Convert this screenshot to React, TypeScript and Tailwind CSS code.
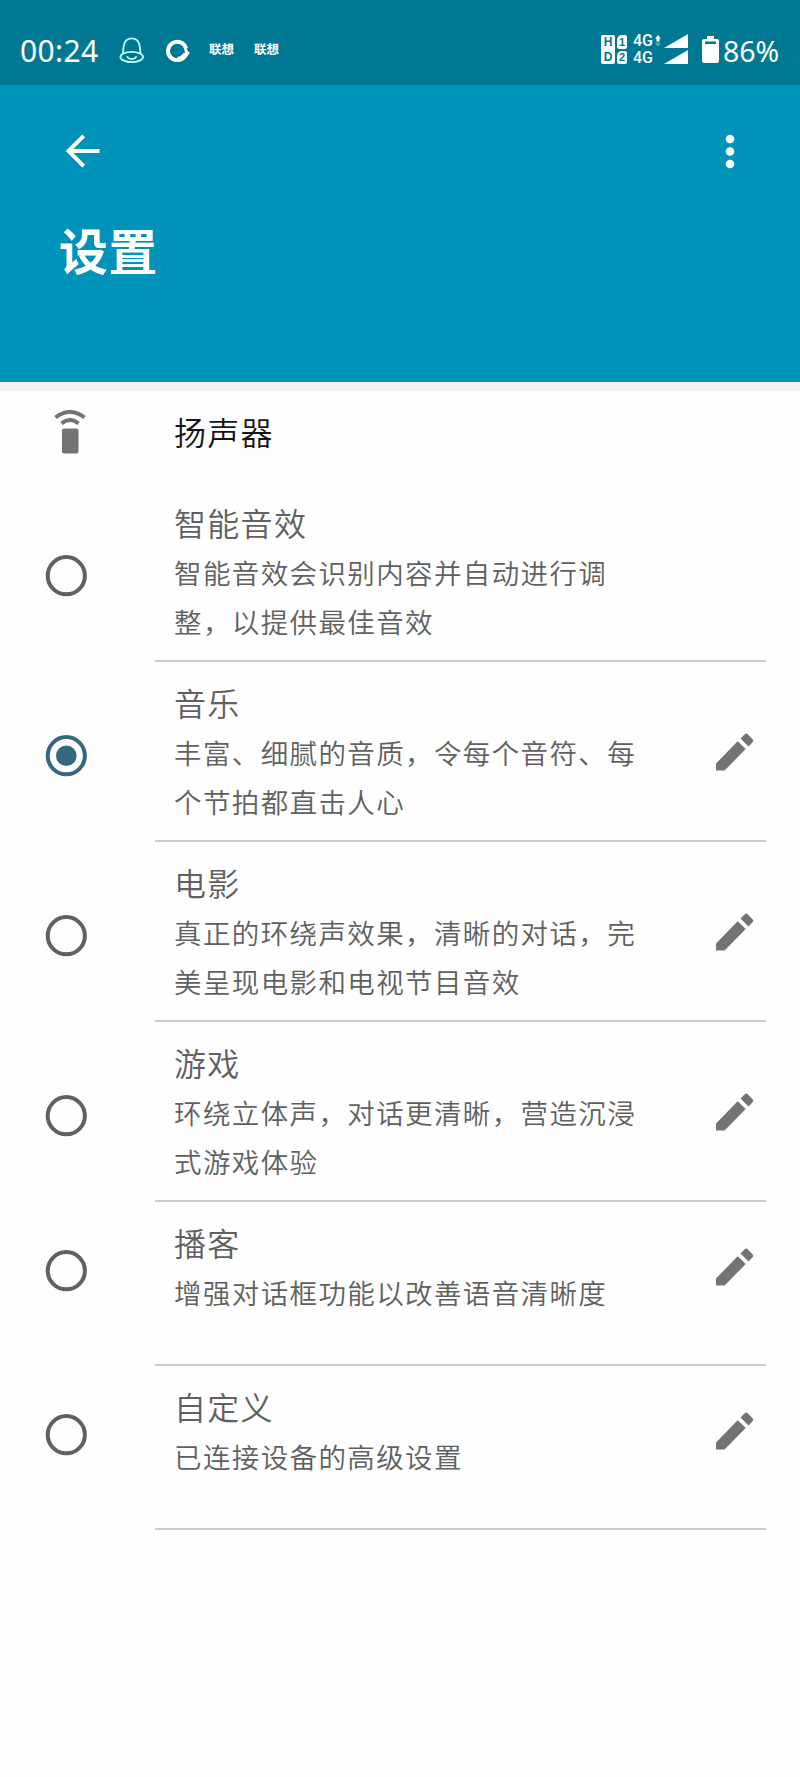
import React from "react";

type Preset = {
  title: string;
  lines: string[];
  editable: boolean;
  selected?: boolean;
};

const presets: Preset[] = [
  { title: "智能音效", lines: ["智能音效会识别内容并自动进行调", "整，以提供最佳音效"], editable: false },
  { title: "音乐", lines: ["丰富、细腻的音质，令每个音符、每", "个节拍都直击人心"], editable: true, selected: true },
  { title: "电影", lines: ["真正的环绕声效果，清晰的对话，完", "美呈现电影和电视节目音效"], editable: true },
  { title: "游戏", lines: ["环绕立体声，对话更清晰，营造沉浸", "式游戏体验"], editable: true },
  { title: "播客", lines: ["增强对话框功能以改善语音清晰度"], editable: true },
  { title: "自定义", lines: ["已连接设备的高级设置"], editable: true },
];

function StatusBar() {
  return (
    <div className="flex h-[85px] shrink-0 items-start bg-[#007893] pt-[30px] text-white">
      <div className="ml-[20px] w-[80px] whitespace-nowrap font-['Noto_Sans'] text-[30px] font-normal leading-[42px] tracking-[0.400px]">00:24</div>
      <svg className="ml-[19px] mt-[7px] h-[27px] w-[26px]" viewBox="0 0 26 27" fill="none" stroke="#c8fbff" strokeWidth="1.8">
        <path d="M3.800 17L4.500 10.500C5 4.500 8 1.300 12.700 1.300S20.400 4.500 20.900 10.500L21.600 17" />
        <ellipse cx="12.700" cy="20" rx="11.300" ry="5.200" />
        <path d="M8 19.300C9.500 23 16 23 17.500 19.300" strokeWidth="1.700" />
      </svg>
      <svg className="ml-[21px] mt-[8px] h-[24px] w-[25px]" viewBox="0 0 25 24" fill="none">
        <path d="M19.500 17A9.200 9.200 0 1 1 20.100 10.500" stroke="#fff" strokeWidth="4" />
        <path d="M20 8.500L22 13.500L24 14.500L20.500 19.500L14.500 17.500L19 15L18 10Z" fill="#fff" />
        <path d="M19.500 15.500A9 9 0 0 1 11.500 20.700" stroke="#fff" strokeWidth="4" />
      </svg>
      <div className="ml-[18px] mt-[9px] w-[26px] whitespace-nowrap font-['Noto_Sans_CJK_SC',sans-serif] text-[12.500px] font-bold leading-[20px]">联想</div>
      <div className="ml-[19px] mt-[9px] w-[26px] whitespace-nowrap font-['Noto_Sans_CJK_SC',sans-serif] text-[12.500px] font-bold leading-[20px]">联想</div>
      <div className="ml-auto mr-[19px] flex items-start">
        <div className="mt-[5px] grid h-[29px] w-[27px] grid-cols-[14px_10px] grid-rows-2 gap-x-[2px] text-center font-['Liberation_Sans',sans-serif] text-[12px] font-bold leading-[14px] text-[#007893]">
          <span className="rounded-t-[2px] bg-white">H</span>
          <span className="mb-px rounded-[2px] rounded-tl-[5px] bg-white text-[11px]">1</span>
          <span className="rounded-b-[2px] bg-white">D</span>
          <span className="mt-px rounded-[2px] rounded-tl-[5px] bg-white text-[11px] leading-[13px]">2</span>
        </div>
        <div className="ml-[5px] mt-[3px] flex w-[22px] flex-col font-['Roboto',sans-serif] text-[16px] font-medium leading-[16.500px]">
          <span>4G</span>
          <span>4G</span>
        </div>
        <svg className="mt-[5px] h-[12px] w-[6px]" viewBox="0 0 6 12">
          <path d="M3 0L6 3.500H4.500V6.500H1.500V3.500H0Z" fill="#fff" />
          <path d="M1.500 7.500H4.500V8.500H6L3 11.500L0 8.500H1.500Z" fill="#5ba6b8" />
        </svg>
        <svg className="ml-[3px] mt-[4px] h-[30px] w-[24px]" viewBox="0 0 24 30" fill="#fff">
          <path d="M24 0V14H0Z" />
          <path d="M24 16V30H0Z" />
        </svg>
        <svg className="ml-[14px] mt-[6px] h-[27px] w-[17px]" viewBox="0 0 17 27">
          <path d="M5 0H12V3H15Q17 3 17 5V25Q17 27 15 27H2Q0 27 0 25V5Q0 3 2 3H5Z" fill="#fff" />
          <path d="M3 5.500H14V8H3Z" fill="#007893" />
        </svg>
        <div className="ml-[4px] w-[58px] whitespace-nowrap font-['Noto_Sans'] text-[28.500px] font-normal leading-[42px]">86%</div>
      </div>
    </div>
  );
}

function Header() {
  return (
    <header className="flex h-[297px] shrink-0 flex-col bg-[#0093ba] text-white">
      <div className="flex items-start justify-between pl-[65px] pr-[65px] pt-[49px]">
        <svg className="h-[34px] w-[35px]" viewBox="0 0 35 34" fill="none" stroke="#fff" strokeWidth="4">
          <path d="M34.500 17H4M18.700 1.800L3.500 17L18.700 32.200" />
        </svg>
        <svg className="h-[35px] w-[10px]" viewBox="0 0 10 35" fill="#fff">
          <circle cx="5" cy="5" r="4.300" />
          <circle cx="5" cy="17.500" r="4.300" />
          <circle cx="5" cy="30" r="4.300" />
        </svg>
      </div>
      <h1 className="ml-[59px] mt-[50px] font-['Noto_Sans_CJK_SC',sans-serif] text-[49px] font-bold leading-[60px] tracking-[0.500px]">设置</h1>
    </header>
  );
}

function Radio({ selected }: { selected?: boolean }) {
  return (
    <svg className="h-[42px] w-[42px]" viewBox="0 0 42 42">
      <circle cx="21.300" cy="20.700" r="18.600" fill="none" stroke={selected ? "#34687f" : "#606060"} strokeWidth="4" />
      {selected && <circle cx="21.300" cy="20.700" r="10.300" fill="#34687f" />}
    </svg>
  );
}

function Pencil() {
  return (
    <svg className="h-[38px] w-[38px]" viewBox="0 0 38 38" fill="#737373">
      <path d="M0 30.500L21.700 8.300L29.700 16L8.600 37.500H0Z" />
      <path d="M24.500 5.500L28.700 1.300Q30.200 -0.200 31.700 1.300L36.500 6.200Q38 7.700 36.500 9.200L32.500 13.500Z" />
    </svg>
  );
}

function Row({ preset }: { preset: Preset }) {
  const tall = preset.lines.length > 1;
  return (
    <div className={tall ? "flex h-[180px] shrink-0 items-start" : "flex h-[164px] shrink-0 items-start"}>
      <div className={tall ? "w-[155px] shrink-0 pl-[45px] pt-[73px]" : "w-[155px] shrink-0 pl-[45px] pt-[48px]"}>
        <Radio selected={preset.selected} />
      </div>
      <div className="flex h-full w-[611px] items-start justify-between border-b-2 border-[#cccccc] pl-[19px] pr-[12px] text-[#606060]">
        <div className="whitespace-nowrap pt-[15px]">
          <h2 className="text-[32px] leading-[50px] tracking-[1.300px]">{preset.title}</h2>
          <div className="pt-px text-[27.500px] leading-[49px] tracking-[1.380px]">
            {preset.lines.map((line) => (
              <p key={line}>{line}</p>
            ))}
          </div>
        </div>
        {preset.editable && (
          <div className={tall ? "pt-[71px]" : "pt-[46px]"}>
            <Pencil />
          </div>
        )}
      </div>
    </div>
  );
}

export default function App() {
  return (
    <div className="flex h-[1777px] w-[800px] flex-col overflow-hidden bg-[#fefefe] font-['Noto_Sans_CJK_SC',sans-serif] font-[350]">
      <StatusBar />
      <Header />
      <div className="h-[9px] shrink-0 bg-[#f2f1f3]" />
      <div className="flex h-[91px] shrink-0 items-start">
        <svg className="ml-[54px] mt-[19px] h-[44px] w-[32px]" viewBox="0 0 32 44" fill="none" stroke="#737373" strokeWidth="4">
          <path d="M1.500 7.500Q16 -3.500 30.500 7.500" />
          <path d="M7.500 13.500Q16 6.500 24.500 13.500" />
          <rect x="8" y="18.500" width="16.500" height="25" rx="2" fill="#737373" stroke="none" />
        </svg>
        <div className="ml-[88px] mt-[15px] text-[32px] leading-[50px] tracking-[1.300px] text-[#151515]">扬声器</div>
      </div>
      {presets.map((preset) => (
        <Row key={preset.title} preset={preset} />
      ))}
    </div>
  );
}
